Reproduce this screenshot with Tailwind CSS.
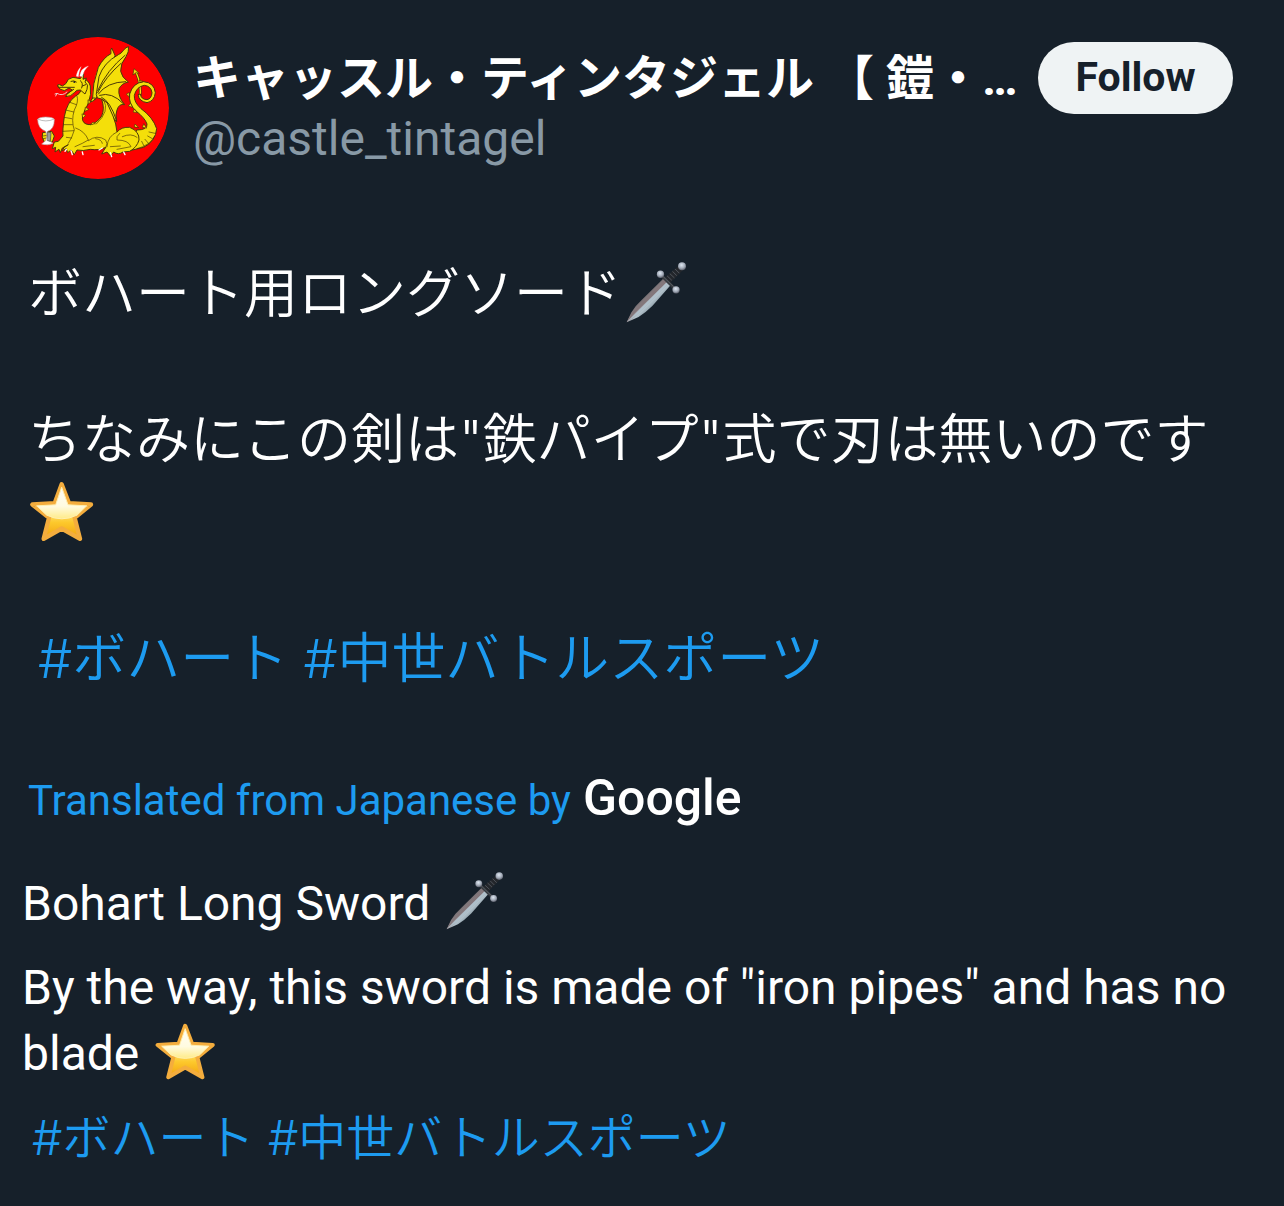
<!DOCTYPE html>
<html lang="ja">
<head>
    <meta charset="UTF-8">
    <meta name="viewport" content="width=device-width, initial-scale=1.0">
    <title>@castle_tintagel</title>

    <!-- Tailwind CSS -->
    <script src="https://cdn.jsdelivr.net/npm/@tailwindcss/browser@4"></script>
</head>
<body class="bg-[#16202a] min-h-screen text-white font-['Roboto','Noto_Sans_CJK_JP',sans-serif]">

    <!-- Shared emoji -->
    <svg class="absolute size-0" aria-hidden="true">
        <defs>
            <linearGradient id="blade" x1="0" y1="0" x2="1" y2="1">
                <stop offset="0.35" stop-color="#5f5a5e"/>
                <stop offset="0.5" stop-color="#978d90"/>
                <stop offset="0.54" stop-color="#b3c3cc"/>
                <stop offset="0.7" stop-color="#6d7b85"/>
            </linearGradient>
            <radialGradient id="knob" cx="0.45" cy="0.35" r="0.65">
                <stop offset="0" stop-color="#dfe8f2"/>
                <stop offset="0.6" stop-color="#a3abb8"/>
                <stop offset="1" stop-color="#5b5f6b"/>
            </radialGradient>
            <linearGradient id="starFill" x1="0" y1="0" x2="0" y2="1">
                <stop offset="0" stop-color="#ffe9b8"/>
                <stop offset="0.45" stop-color="#ffe98c"/>
                <stop offset="0.7" stop-color="#fdc92c"/>
                <stop offset="1" stop-color="#f2a010"/>
            </linearGradient>
            <linearGradient id="starShine" x1="0" y1="0" x2="0" y2="1">
                <stop offset="0" stop-color="#fffdf5"/>
                <stop offset="0.6" stop-color="#fffbe0"/>
                <stop offset="1" stop-color="#ffeb88"/>
            </linearGradient>
        </defs>
        <symbol id="dagger" viewBox="45 30 182 184">
            <path d="M46 212 L60 182 Q72 162 92 144 L157 80 L179 99 L124 162 Q102 184 82 196 Z" fill="url(#blade)"/>
            <path d="M46 212 L62 184 L162 82 L169 89 L70 184 Z" fill="#83767a"/>
            <path d="M46 212 L72 185 L169 89 L173 94 L80 187 Z" fill="#afc0cb"/>
            <path d="M160 78 L203 41 L216 54 L176 94 Z" fill="#23262b"/>
            <path d="M168 72 L182 85 M176 65 L190 78 M184 58 L197 71 M192 51 L205 64" stroke="#50555c" stroke-width="3"/>
            <path d="M150 70 L192 111" stroke="#34383d" stroke-width="9"/>
            <path d="M153 71 L190 107" stroke="#6d737b" stroke-width="2"/>
            <circle cx="148" cy="67" r="11" fill="url(#knob)"/>
            <circle cx="195" cy="114" r="11" fill="url(#knob)"/>
            <circle cx="213" cy="43" r="12" fill="url(#knob)"/>
        </symbol>
        <symbol id="star" viewBox="29 32 192 182">
            <path d="M124 41 L146 98 L212 102 L163 142 L179 205 L124 174 L70 205 L86 142 L36 102 L103 98 Z" fill="url(#starFill)" stroke="#f4ad3d" stroke-width="13" stroke-linejoin="round"/>
            <path d="M124 50 L143 103 L199 106 L170 134 Q124 156 79 134 L49 106 L106 103 Z" fill="url(#starShine)" stroke="#fff0b0" stroke-width="3" stroke-linejoin="round"/>
        </symbol>
    </svg>

    <main class="pt-[37px] pb-8">
        <!-- Author -->
        <header class="flex items-start pl-[27px] pr-[51px]">
            <a href="#" class="shrink-0" aria-label="castle_tintagel">
                <svg class="size-[142px] rounded-full" viewBox="22 21 426 426" fill="#f4df0a" stroke="#4b3a08" stroke-width="3" stroke-linejoin="round" stroke-linecap="round">
                    <circle cx="235" cy="234" r="213" fill="#fe0000" stroke="none"/>
                    <!-- far wing -->
                    <path d="M218 212 Q218 160 236 112 Q252 82 274 71 Q272 58 276 54 L286 76 Q284 98 266 120 L230 205 Z"/>
                    <!-- near wing -->
                    <path d="M230 192 L238 140 Q252 98 296 74 Q306 70 310 62 Q320 50 327 50 Q328 66 319 80 Q302 100 303 124 Q306 142 326 156 Q306 160 298 176 Q294 200 315 224 Q298 220 292 240 Q286 252 291 275 Q272 256 266 230 Q256 206 234 204 Z"/>
                    <path d="M234 182 Q262 120 316 76 M234 188 Q258 140 304 100 M236 192 Q262 156 318 155 M240 196 Q276 184 312 222 M246 202 Q272 214 290 270" fill="none"/>
                    <!-- tail -->
                    <path d="M361 204 Q366 164 350 128" fill="none" stroke-width="8"/>
                    <path d="M361 204 Q366 164 350 128" fill="none" stroke="#f4df0a" stroke-width="4"/>
                    <path d="M340 134 L343 116 L359 130 L350 128 Z" stroke-width="2"/>
                    <path d="M352 300 Q384 300 382 282 Q376 264 348 242 Q326 222 330 192 Q340 158 372 155 Q404 158 407 188 Q404 214 382 218 Q358 214 355 194 L362 192 Q364 208 382 209 Q396 206 397 188 Q394 168 374 166 Q350 170 344 196 Q342 216 364 236 Q400 262 411 296 Q408 334 372 352 L330 362 Z"/>
                    <path d="M352 356 Q392 346 405 318 M384 318 L398 326 M376 328 L388 342 M366 334 L374 350 M388 306 L406 310" fill="none" stroke-width="2"/>
                    <path d="M328 188 L320 192 L328 200 Z M332 220 L326 228 L338 232 Z M344 238 L340 246 L352 248 Z M372 282 L368 292 L380 294 Z M344 290 L346 282 L356 292 Z M362 156 L358 150 L370 154 Z" stroke-width="2"/>
                    <!-- neck and body -->
                    <path d="M184 182 Q180 192 168 198 Q142 216 134 260 Q128 300 130 318 L116 334 L104 336 L98 356 L108 352 L106 366 L118 358 L122 368 L128 354 Q136 350 146 344 Q130 350 128 362 L140 356 L144 368 L154 360 L164 374 L172 360 Q190 364 212 358 Q240 362 258 352 L246 372 L262 366 L272 378 L282 366 Q296 376 310 366 L330 364 Q352 352 358 330 Q360 304 330 292 Q306 290 292 306 Q290 282 280 258 L262 218 L246 208 Q256 236 246 258 Q230 282 208 284 Q188 282 188 264 Q192 244 206 220 Q216 192 212 168 Q206 148 190 146 Z"/>
                    <path d="M172 198 Q178 214 164 240 Q154 272 164 300 Q158 322 146 340 M148 216 L170 224 M138 240 L162 246 M134 262 L156 266 M132 284 L158 284 M130 304 L162 302 M140 322 L156 324 M168 294 Q196 304 206 330 Q190 340 166 350 M206 332 Q232 312 258 330 Q266 340 258 354 M228 326 Q246 328 248 340 M292 306 Q264 318 262 350 M300 310 Q288 320 292 330 Q326 330 334 350 L292 358 M308 320 Q334 308 352 322 M190 350 L224 346 M272 350 L302 348 M252 210 Q272 242 230 282" fill="none" stroke-width="2"/>
                    <path d="M206 210 L216 214 L206 222 Z M198 232 L208 238 L196 244 Z M188 252 L198 256 L190 264 Z M212 284 L220 276 L226 280 Z" stroke-width="2"/>
                    <path d="M212 216 Q222 216 228 204 L220 204 Z"/>
                    <!-- head -->
                    <path d="M114 168 Q112 162 120 164 L128 168 Q140 164 146 148 L160 142 L182 146 L192 132 L190 148 L200 144 L196 156 Q208 164 202 178 L196 192 L182 180 Q170 178 164 188 Q154 200 138 200 L142 192 L158 180 L148 174 L134 182 Q118 180 114 168 Z"/>
                    <path d="M154 154 Q162 150 170 156 M116 172 L164 172 M142 192 L162 178 M182 152 Q192 158 186 174 M188 168 L198 164" fill="none"/>
                    <circle cx="164" cy="156" r="3" fill="#222" stroke="none"/>
                    <path d="M170 138 Q172 122 184 110 Q178 124 176 140 Z M180 138 Q184 114 206 108 Q192 120 188 140 Z" fill="#fff" stroke="#eee" stroke-width="1"/>
                    <path d="M142 186 Q128 200 112 190 L106 192 M112 190 L108 198" fill="none" stroke="#e8c9c9"/>
                    <!-- goblet -->
                    <path d="M70 308 L96 304 L104 318 L98 336 L74 336 L68 322 Z"/>
                    <path d="M70 318 L82 316 M70 326 L82 324" fill="none" stroke-width="2"/>
                    <path d="M54 268 Q56 262 78 261 Q102 262 104 268 Q104 298 84 304 L84 318 L88 332 L100 340 Q84 348 66 342 L78 332 L82 318 L78 304 Q54 296 54 268 Z" fill="#fff" stroke="#b9a5a5" stroke-width="2"/>
                    <path d="M56 268 Q78 278 102 268" fill="none" stroke="#999" stroke-width="2"/>
                    <path d="M84 306 L94 308 L92 334 L84 332 Z" fill="#999" stroke="#444" stroke-width="2"/>
                    <!-- claws -->
                    <path d="M140 358 L136 364 M154 362 L158 374 M188 366 L190 374 M248 354 L238 360 M272 368 L276 380 M312 366 L316 374" fill="none" stroke="#fff" stroke-width="4"/>
                </svg>
            </a>
            <div class="min-w-0 flex-1 pt-3 pl-6">
                <h1 class="text-[48px] leading-[60px] font-bold whitespace-nowrap">キャッスル・ティンタジェル 【 鎧・…</h1>
                <p class="text-[48px] leading-[60px] text-[#8899a6]">@castle_tintagel</p>
            </div>
            <button type="button" class="mt-[5px] ml-5 h-[72px] w-[195px] shrink-0 rounded-full bg-[#eff3f4] text-[41px] font-bold text-[#16202a]">Follow</button>
        </header>

        <!-- Original post -->
        <section class="mt-[78px] px-7 text-[54px] leading-[73px] font-[350] font-['Inter','Noto_Sans_CJK_JP',sans-serif]">
            <p>ボハート用ロングソード<svg class="inline-block size-[61px] ml-1 align-[-10px]" role="img" aria-label="dagger"><use href="#dagger"/></svg></p>
            <p class="mt-[73px]">ちなみにこの剣は"鉄パイプ"式で刃は無いのです<br><svg class="inline-block h-[61px] w-[64px] ml-0.5 align-[-10px]" role="img" aria-label="star"><use href="#star"/></svg></p>
            <p class="mt-[73px] pl-[10px] text-[#1d9bf0]"><a href="#">#ボハート</a> <a href="#">#中世バトルスポーツ</a></p>
        </section>

        <!-- Translation -->
        <section class="mt-[70px] px-[22px] text-[48px] leading-[66px]">
            <p class="flex items-baseline gap-3 pl-[6px] text-[42px] text-[#1d9bf0]">
                <a href="#">Translated from Japanese by</a>
                <span class="text-[50px] font-medium text-white">Google</span>
            </p>
            <p class="mt-[37px]" lang="en">Bohart Long Sword <svg class="inline-block size-[58px] ml-1 align-[-10px]" role="img" aria-label="dagger"><use href="#dagger"/></svg></p>
            <p class="mt-[18px]" lang="en">By the way, this sword is made of "iron pipes" and has no blade <svg class="inline-block h-[57px] w-[61px] ml-1 align-[-10px]" role="img" aria-label="star"><use href="#star"/></svg></p>
            <p class="mt-[18px] pl-[10px] font-[350] text-[#1d9bf0] font-['Inter','Noto_Sans_CJK_JP',sans-serif]"><a href="#">#ボハート</a> <a href="#">#中世バトルスポーツ</a></p>
        </section>
    </main>
</body>
</html>
